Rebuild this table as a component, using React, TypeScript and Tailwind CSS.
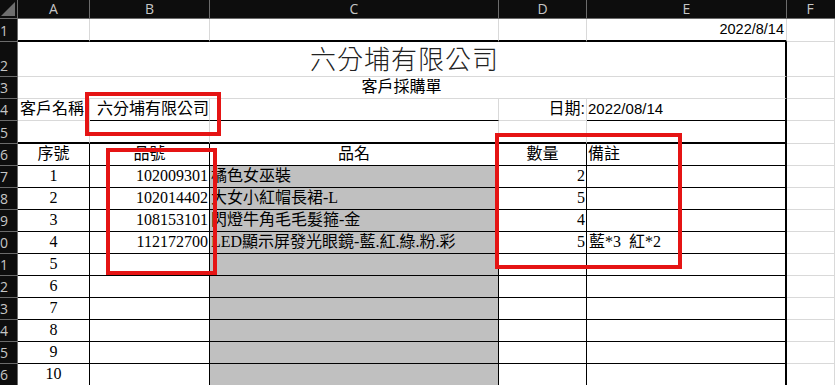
import React from "react";

const FONT = "font-['Liberation_Serif','Noto_Sans_CJK_TC',serif]";
const SANS = "font-['Liberation_Sans','Noto_Sans_CJK_TC',sans-serif]";

const Cell = ({
  className = "",
  children,
}: {
  className?: string;
  children?: React.ReactNode;
}) => (
  <div className={`flex h-full shrink-0 items-end whitespace-nowrap pb-[1px] ${className}`}>
    {children}
  </div>
);

const RowHead = ({ n }: { n: number }) => (
  <div className="flex h-full w-[18px] shrink-0 items-end justify-end overflow-hidden border-b border-r border-[#6b6b6b] bg-[#0d0d0d] pb-[1px] pr-[9px] font-['Open_Sans',sans-serif] text-[14px] leading-[18px] text-[#c6c6c6]">
    <span>{n}</span>
  </div>
);

const grid = "border-b border-r border-[#d9d9d9]";

const items = [
  { no: 1, code: "102009301", name: "橘色女巫裝", qty: "2", note: "" },
  { no: 2, code: "102014402", name: "大女小紅帽長裙-L", qty: "5", note: "" },
  { no: 3, code: "108153101", name: "閃燈牛角毛毛髮箍-金", qty: "4", note: "" },
  { no: 4, code: "112172700", name: "LED顯示屏發光眼鏡-藍.紅.綠.粉.彩", qty: "5", note: "藍*3  紅*2" },
  { no: 5, code: "", name: "", qty: "", note: "" },
  { no: 6, code: "", name: "", qty: "", note: "" },
  { no: 7, code: "", name: "", qty: "", note: "" },
  { no: 8, code: "", name: "", qty: "", note: "" },
  { no: 9, code: "", name: "", qty: "", note: "" },
  { no: 10, code: "", name: "", qty: "", note: "" },
];

const letters = [
  { l: "A", w: "w-[72px]" },
  { l: "B", w: "w-[120px]" },
  { l: "C", w: "w-[289px]" },
  { l: "D", w: "w-[88px]" },
  { l: "E", w: "w-[200px]" },
];

export default function App() {
  return (
    <div className={`relative h-[385px] w-[835px] overflow-hidden bg-white text-[16px] leading-[20px] text-black ${FONT}`}>
      {/* column headers */}
      <div className="flex h-[19px]">
        <div className="relative w-[18px] shrink-0 border-b border-r border-[#6b6b6b] bg-[#0d0d0d]">
          <svg className="absolute left-0 top-0" width="17" height="18" viewBox="0 0 17 18">
            <polygon points="15,2 15,16 1,16" fill="#6e6e6e" />
          </svg>
        </div>
        {letters.map((c) => (
          <div
            key={c.l}
            className={`${c.w} flex shrink-0 items-center justify-center border-b border-r border-[#6b6b6b] bg-[#0d0d0d] font-['Open_Sans',sans-serif] text-[14px] leading-none text-[#c6c6c6]`}
          >
            {c.l}
          </div>
        ))}
        <div className="flex flex-1 items-center justify-center border-b border-[#6b6b6b] bg-[#0d0d0d] pr-[2px] font-['Open_Sans',sans-serif] text-[14px] leading-none text-[#c6c6c6]">
          F
        </div>
      </div>

      {/* row 1 */}
      <div className="flex h-[23px]">
        <RowHead n={1} />
        <Cell className="w-[72px] border-b-2 border-r border-[#d9d9d9] border-b-black" />
        <Cell className="w-[120px] border-b-2 border-r border-[#d9d9d9] border-b-black" />
        <Cell className="w-[289px] border-b-2 border-r border-[#d9d9d9] border-b-black" />
        <Cell className="w-[88px] border-b-2 border-r border-[#d9d9d9] border-b-black" />
        <Cell className={`w-[200px] justify-end border-b-2 border-r border-[#d9d9d9] border-b-black pr-[2px] text-[14.5px] ${SANS}`}>
          2022/8/14
        </Cell>
        <Cell className={`flex-1 ${grid}`} />
      </div>

      {/* row 2 */}
      <div className="flex h-[35px]">
        <RowHead n={2} />
        <Cell className="w-[769px] justify-center border-b border-r-2 border-[#d9d9d9] border-r-black pb-[3px]">
          <span className="pl-[6px] font-['Noto_Sans_CJK_TC',sans-serif] text-[26px] font-light leading-[30px] tracking-[1px] text-[#222]">
            六分埔有限公司
          </span>
        </Cell>
        <Cell className={`flex-1 ${grid}`} />
      </div>

      {/* row 3 */}
      <div className="flex h-[22px]">
        <RowHead n={3} />
        <Cell className="w-[769px] justify-center border-b border-r-2 border-[#d9d9d9] border-r-black">
          <span>客戶採購單</span>
        </Cell>
        <Cell className={`flex-1 ${grid}`} />
      </div>

      {/* row 4 */}
      <div className="flex h-[22px]">
        <RowHead n={4} />
        <Cell className={`w-[72px] pl-[2px] ${grid}`}>客戶名稱</Cell>
        <Cell className="w-[120px] border-b border-r border-[#d9d9d9] border-b-black pl-[7px]">六分埔有限公司</Cell>
        <Cell className="w-[289px] border-b border-r border-[#d9d9d9] border-b-black" />
        <Cell className={`w-[88px] justify-end pr-[1px] ${grid}`}>
          日期<span className={SANS}>:</span>
        </Cell>
        <Cell className={`w-[200px] border-b border-r-2 border-b-black border-r-black pl-[1px] text-[15px] ${SANS}`}>
          2022/08/14
        </Cell>
        <Cell className={`flex-1 ${grid}`} />
      </div>

      {/* row 5 */}
      <div className="flex h-[23px]">
        <RowHead n={5} />
        <Cell className="w-[72px] border-b-2 border-r border-[#d9d9d9] border-b-black" />
        <Cell className="w-[120px] border-b-2 border-r border-[#d9d9d9] border-b-black" />
        <Cell className="w-[289px] border-b-2 border-r border-[#d9d9d9] border-b-black" />
        <Cell className="w-[88px] border-b-2 border-r border-[#d9d9d9] border-b-black" />
        <Cell className="w-[200px] border-b-2 border-r-2 border-black" />
        <Cell className={`flex-1 ${grid}`} />
      </div>

      {/* row 6: table head */}
      <div className="flex h-[22px]">
        <RowHead n={6} />
        <Cell className="w-[72px] justify-center border-b border-r border-black">序號</Cell>
        <Cell className="w-[120px] justify-center border-b border-r border-black">品號</Cell>
        <Cell className="w-[289px] justify-center border-b border-r border-black">品名</Cell>
        <Cell className="w-[88px] justify-center border-b border-r border-black">數量</Cell>
        <Cell className="w-[200px] border-b border-r-2 border-black pl-[1px]">備註</Cell>
        <Cell className={`flex-1 ${grid}`} />
      </div>

      {items.map((it) => (
        <div key={it.no} className="flex h-[22px]">
          <RowHead n={it.no + 6} />
          <Cell className="w-[72px] justify-center border-b border-r border-black">{it.no}</Cell>
          <Cell className="w-[120px] justify-end border-b border-r border-black pr-[1px]">{it.code}</Cell>
          <Cell className="w-[289px] overflow-hidden border-b border-r border-black bg-[#c0c0c0] pl-[1px]">{it.name}</Cell>
          <Cell className="w-[88px] justify-end border-b border-r border-black pr-[1px]">{it.qty}</Cell>
          <Cell className="w-[200px] border-b border-r-2 border-black pl-[2px]">
            <span className="whitespace-pre">{it.note}</span>
          </Cell>
          <Cell className={`flex-1 ${grid}`} />
        </div>
      ))}

      {/* red annotation boxes */}
      <div className="absolute left-[85px] top-[92px] h-[44px] w-[136px] border-4 border-[#e51414]" />
      <div className="absolute left-[106px] top-[148px] h-[127px] w-[111px] border-4 border-[#e51414]" />
      <div className="absolute left-[495px] top-[133px] h-[136px] w-[187px] border-4 border-[#e51414]" />
    </div>
  );
}
